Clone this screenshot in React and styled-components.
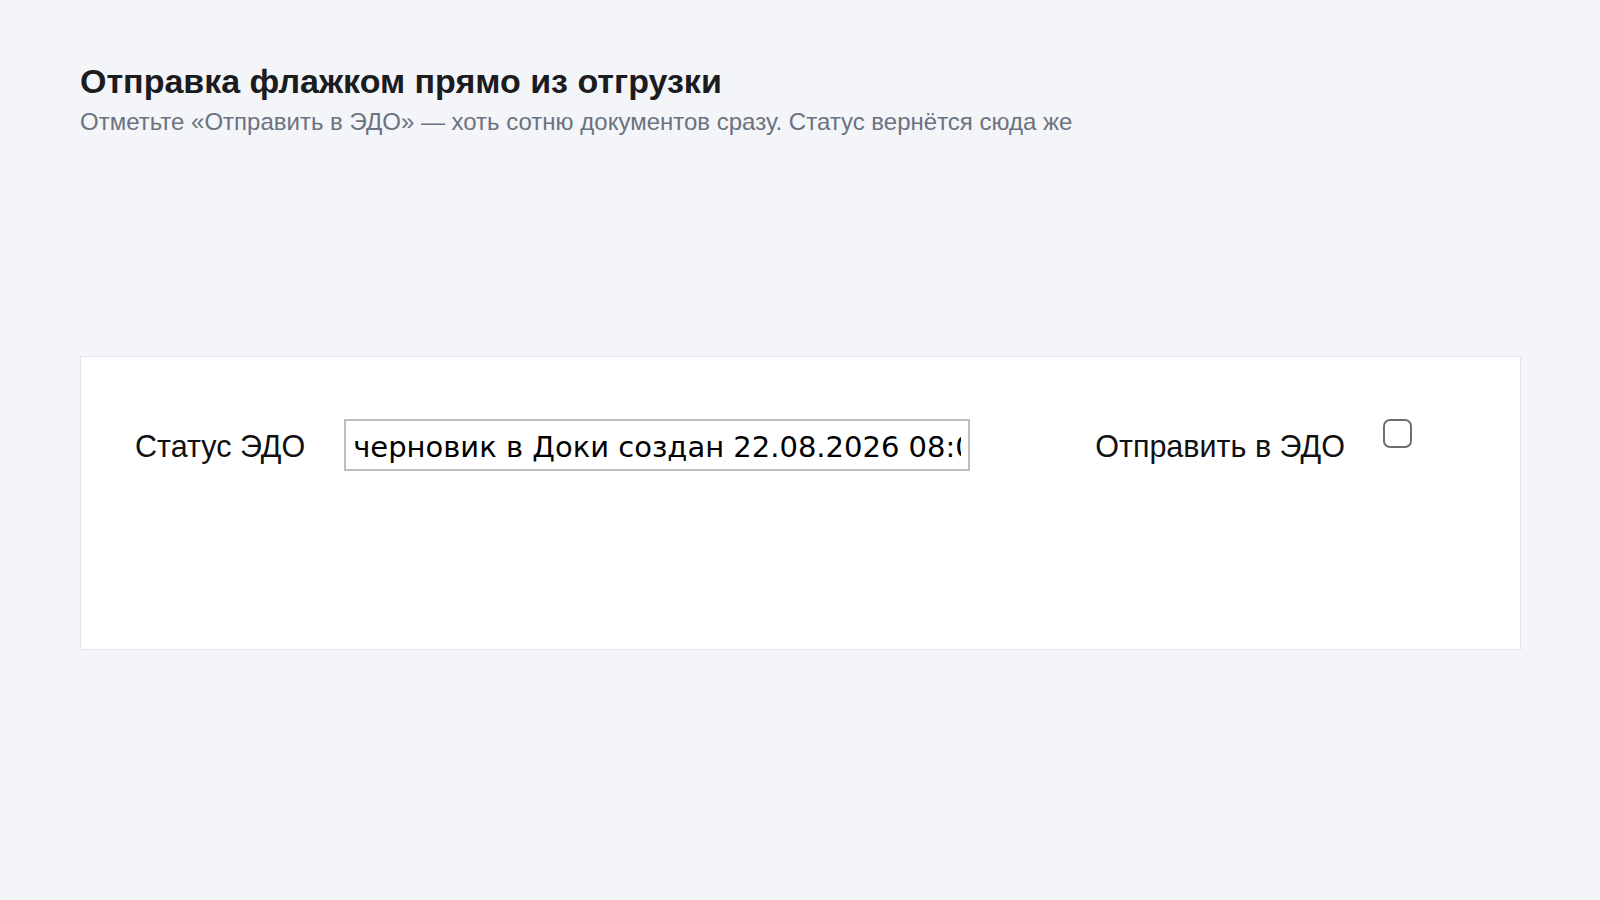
import React from 'react'
import styled, { createGlobalStyle } from 'styled-components'

const GlobalStyle = createGlobalStyle`
    html, body {
        margin: 0;
        padding: 0;
        background: #f4f5f9;
    }
    body {
        font-family: "Liberation Sans", Arial, sans-serif;
    }
`

const Page = styled.div`
    min-height: 900px;
    padding: 61px 80px 0 80px;
    box-sizing: border-box;
`

const Title = styled.h1`
    margin: 0;
    font-size: 34px;
    font-weight: 700;
    color: #1b1c1f;
    line-height: 40px;
`

const Subtitle = styled.p`
    margin: 6px 0 0 0;
    font-size: 24px;
    color: #6b7280;
    line-height: 30px;
`

const Card = styled.div`
    margin-top: 219px;
    width: 1441px;
    height: 294px;
    box-sizing: border-box;
    background: #fff;
    border: 1px solid #e3e5ea;
    padding: 62px 0 0 54px;
`

const Row = styled.div`
    display: flex;
    align-items: center;
`

const Label = styled.label`
    font-size: 30.5px;
    color: #111;
    margin-right: ${p => p.gap}px;
    white-space: nowrap;
    padding-top: 2px;
`

const StatusInput = styled.input`
    width: 626px;
    height: 52px;
    box-sizing: border-box;
    border: 2px solid #bdbdbd;
    padding: 3px 7px 0 7px;
    font-family: "DejaVu Sans", sans-serif;
    font-size: 29px;
    color: #000;
    outline: none;
    margin-right: 125px;
`

const Check = styled.input`
    appearance: none;
    width: 29px;
    height: 29px;
    margin: 0;
    border: 2px solid #6e6e6e;
    border-radius: 7px;
    background: #fff;
    align-self: flex-start;
    box-sizing: border-box;
`

export default function App() {
    return (
        <>
            <GlobalStyle />
            <Page>
                <Title>Отправка флажком прямо из отгрузки</Title>
                <Subtitle>Отметьте «Отправить в ЭДО» — хоть сотню документов сразу. Статус вернётся сюда же</Subtitle>
                <Card>
                    <Row>
                        <Label gap={39}>Статус ЭДО</Label>
                        <StatusInput readOnly value="черновик в Доки создан 22.08.2026 08:00" />
                        <Label gap={38}>Отправить в ЭДО</Label>
                        <Check type="checkbox" />
                    </Row>
                </Card>
            </Page>
        </>
    )
}
